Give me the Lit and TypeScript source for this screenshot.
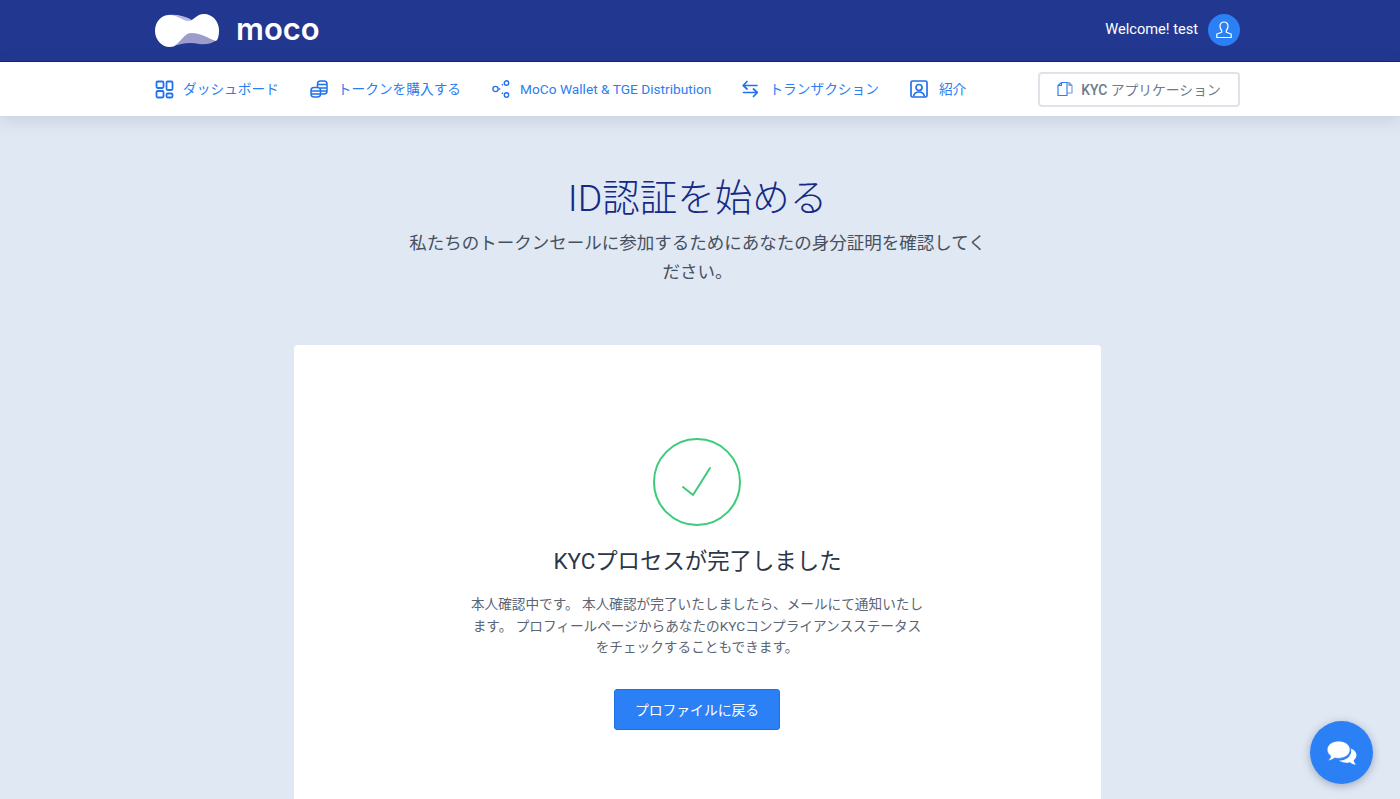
import { LitElement, html, css } from "lit";
import { customElement } from "lit/decorators.js";

@customElement("app-root")
export class AppRoot extends LitElement {
  static styles = css`
    :host { display: block; height: 799px; overflow: hidden; position: relative; background: #e0e8f3; font-family: Roboto, "Noto Sans CJK JP", sans-serif; }
    .wrap { width: 1085px; margin-left: 155px; }
    .top { height: 61px; background: #223790; border-bottom: 1px solid #0f2180; }
    .top .wrap { height: 60px; display: flex; align-items: center; justify-content: space-between; }
    .brand { display: flex; align-items: center; gap: 17px; }
    .moco { font-family: Inter, sans-serif; font-weight: 600; font-size: 31px; color: #fff; line-height: 1; padding-bottom: 3px; }
    .user { display: flex; align-items: center; gap: 10px; color: #fff; font-size: 14.6px; }
    .hello { padding-bottom: 2px; }
    .avatar { width: 32px; height: 32px; border-radius: 50%; background: #2c80f6; display: flex; align-items: center; justify-content: center; }
    .nav { height: 54px; background: #fff; box-shadow: 0 4px 16px rgba(60, 80, 130, .16); position: relative; }
    .nav .wrap { height: 54px; display: flex; align-items: center; justify-content: space-between; }
    .links { display: flex; align-items: center; gap: 31px; }
    .link { display: flex; align-items: center; gap: 9px; color: #2c7df0; font-size: 13.7px; white-space: nowrap; }
    .ja { padding-bottom: 2px; }
    .kyc { box-sizing: border-box; width: 202px; height: 35px; border: 2px solid #dfe3e9; border-radius: 4px; display: flex; align-items: center; justify-content: center; gap: 8px; color: #6c7a8c; font-size: 13.8px; }
    .kyc b { font-weight: 500; }
    .head { text-align: center; padding-top: 59px; }
    h1 { margin: 0; font-weight: 300; font-size: 37.5px; line-height: 46px; color: #152a85; }
    .lead { width: 590px; margin: 8px auto 0; font-size: 17.5px; line-height: 29px; color: #46505f; }
    .card { width: 807px; height: 500px; box-sizing: border-box; margin: 58px auto 0; background: #fff; border-radius: 4px; padding-top: 93px; text-align: center; }
    .check { display: block; margin-left: 359px; }
    h2 { margin: 19px 0 0; font-weight: 400; font-size: 22.4px; line-height: 32px; color: #2b3648; }
    .body { width: 456px; margin: 17px 0 0 175px; font-size: 13.65px; line-height: 21.5px; color: #5a6575; }
    .btn { box-sizing: border-box; display: flex; align-items: center; justify-content: center; width: 166px; height: 41px; margin: 30px 0 0 320px; background: #2c80f6; border: 1px solid #1d6fe6; border-radius: 3px; color: #fff; font-size: 13.8px; }
    .chat { position: absolute; left: 1310px; top: 721px; width: 63px; height: 63px; border-radius: 50%; background: #2c80f6; box-shadow: 0 2px 8px rgba(30, 50, 90, .35); display: flex; align-items: center; justify-content: center; }
  `;

  render() {
    return html`
      <div class="top"><div class="wrap">
        <div class="brand">
          <svg width="64" height="33" viewBox="0 0 64 33">
            <path d="M13 1C22 0 30 2 37 6L30 10C24 7 18 3 13 1Z" fill="#b9b9dd"/>
            <path d="M17 33C26 29 36 28 44 30C50 31 57 30 63 25L55 18L30 14Z" fill="#9d9dcc"/>
            <path d="M14 1C24 1 27 7 33 7C39 7 41 0 49 0C58 0 64 8 64 16C64 22 63 25 61 27C54 25 47 19 36 19C28 19 24 33 15 33C6 33 0 25 0 17C0 8 6 1 14 1Z" fill="#fff"/>
          </svg>
          <span class="moco">moco</span>
        </div>
        <div class="user">
          <span class="hello">Welcome! test</span>
          <span class="avatar">
            <svg width="18" height="18" viewBox="0 0 18 18" fill="none" stroke="#fff" stroke-width="1.2" stroke-linejoin="round"><path d="M9 1C6.400 1 5 2.800 5 5.200c0 1.800.7 3.300 1.700 4.300v1.700L1.800 13v3.500h14.400V13l-4.900-1.800V9.500c1-1 1.700-2.500 1.700-4.300C13 2.800 11.600 1 9 1z"/></svg>
          </span>
        </div>
      </div></div>
      <div class="nav"><div class="wrap">
        <div class="links">
          <span class="link">
            <svg width="19" height="19" viewBox="0 0 19 19" fill="none" stroke="#2272ea" stroke-width="1.8"><rect x="1.500" y="1.500" width="7" height="6.500" rx="1.200"/><rect x="11.500" y="1.500" width="6" height="8.500" rx="1.200"/><rect x="1.500" y="11" width="7" height="6.500" rx="1.200"/><rect x="11.500" y="13.500" width="6" height="4" rx="1.200"/></svg>
            <span class="ja">ダッシュボード</span>
          </span>
          <span class="link">
            <svg width="19" height="18" viewBox="0 0 19 18" fill="none" stroke="#2272ea" stroke-width="1.5"><rect x="7.500" y="1" width="9.500" height="13" rx="3"/><path d="M7.500 4.500h9.500M10 8h7M10 11h7"/><rect x="1" y="7.500" width="9.500" height="9.500" rx="3" fill="#fff"/><path d="M1 11h9.500M1 14h9.500"/></svg>
            <span class="ja">トークンを購入する</span>
          </span>
          <span class="link">
            <svg width="19" height="18" viewBox="0 0 19 18" fill="none" stroke="#2272ea" stroke-width="1.4"><circle cx="3.500" cy="9" r="2.600"/><circle cx="14.500" cy="3" r="2.200"/><circle cx="14.500" cy="15" r="2.200"/><path d="M6.800 9h2.400M11 4.300l-1.200.8M11 13.700l-1.200-.8" stroke-dasharray="1.500 1"/></svg>
            <span>MoCo Wallet &amp; TGE Distribution</span>
          </span>
          <span class="link">
            <svg width="18" height="18" viewBox="0 0 18 18" fill="none" stroke="#2272ea" stroke-width="1.7" stroke-linecap="round" stroke-linejoin="round"><path d="M15 5.500H1.500M5 1.500L1.200 5.500 5 9M1.500 12.500H15M11.500 9l3.800 3.500-3.800 4"/></svg>
            <span class="ja">トランザクション</span>
          </span>
          <span class="link">
            <svg width="20" height="18" viewBox="0 0 20 18" fill="none" stroke="#2272ea" stroke-width="1.7"><rect x="1" y="1" width="16" height="16" rx="1.500"/><circle cx="9" cy="7.500" r="3"/><path d="M3.500 16.500c.5-3 2.800-4.500 5.500-4.500s5 1.500 5.500 4.500"/></svg>
            <span class="ja">紹介</span>
          </span>
        </div>
        <span class="kyc">
          <svg width="16" height="16" viewBox="0 0 16 16" fill="none" stroke-width="1.200" stroke-linejoin="round"><path d="M10 1.500h2L15 4.500V12h-5M12 1.500V4.500h3" stroke="#7c9fd0"/><path d="M1 4.500L4.500 1.500H10v13H1zM4.500 1.500V4.500H1" stroke="#2c80f6"/></svg>
          <span><b>KYC</b> アプリケーション</span>
        </span>
      </div></div>
      <div class="wrap">
        <div class="head">
          <h1>ID認証を始める</h1>
          <div class="lead">私たちのトークンセールに参加するためにあなたの身分証明を確認してください。</div>
        </div>
        <div class="card">
          <svg class="check" width="88" height="88" viewBox="0 0 88 88" fill="none" stroke="#3ccb7a" stroke-width="2"><circle cx="44" cy="44" r="43"/><path d="M30 49l10 8 17-27" stroke-linecap="round" stroke-linejoin="round"/></svg>
          <h2>KYCプロセスが完了しました</h2>
          <div class="body">本人確認中です。 本人確認が完了いたしましたら、メールにて通知いたします。 プロフィールページからあなたのKYCコンプライアンスステータスをチェックすることもできます。</div>
          <span class="btn">プロファイルに戻る</span>
        </div>
      </div>
      <div class="chat">
        <svg width="32" height="26" viewBox="0 0 32 27" fill="#fff"><path d="M24 8.500c4 1 7 3.800 7 7.200 0 2.200-1.200 4.100-3 5.500.3 1.600 1.200 3 2.500 4.300-2.400-.2-4.600-1.100-6.300-2.500-1.300.4-2.600.6-4 .6-2.800 0-5.300-.8-7.200-2.200 6.800 0 12.600-4.200 12.600-10 0-1-.2-2-.6-2.900z"/><path d="M12.500 1C5.900 1 .5 5 .5 10c0 2.700 1.500 5 3.800 6.700-.3 1.600-1.200 3-2.800 4.800 2.700-.2 5-1.200 6.800-2.800 1.300.3 2.700.4 4.200.4 6.600 0 12-4 12-9.100S19.100 1 12.500 1z" stroke="#2c80f6" stroke-width="0.8"/></svg>
      </div>
    `;
  }
}
